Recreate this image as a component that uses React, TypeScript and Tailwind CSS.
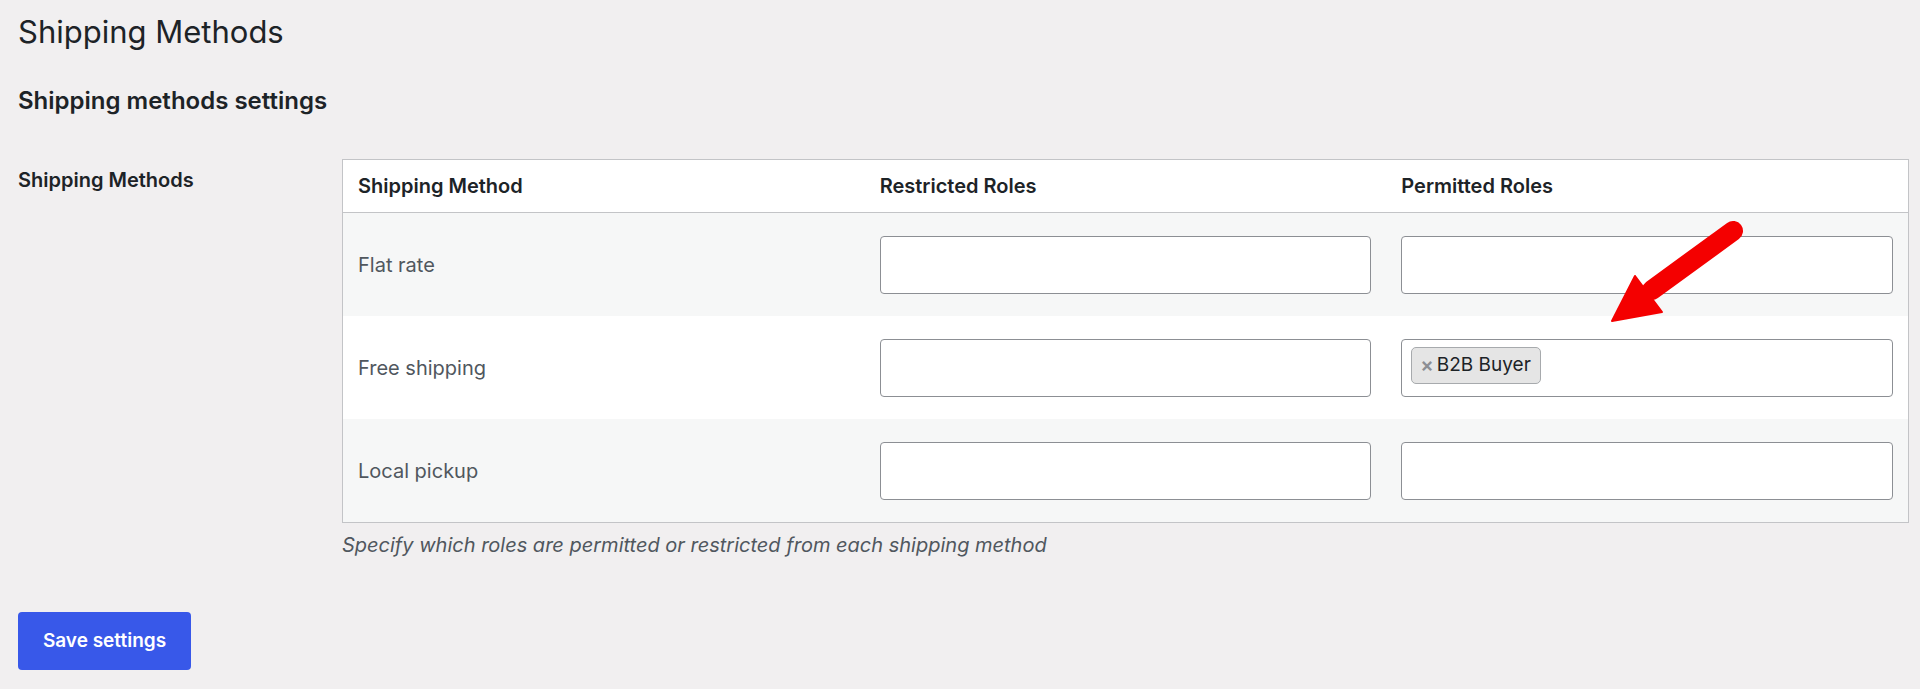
import React from 'react';

type Method = { name: string; permitted: string[] };

const methods: Method[] = [
  { name: 'Flat rate', permitted: [] },
  { name: 'Free shipping', permitted: ['B2B Buyer'] },
  { name: 'Local pickup', permitted: [] },
];

const RoleField: React.FC<{ roles?: string[] }> = ({ roles = [] }) => (
  <div className="h-[58px] w-full rounded-[4px] border border-[#8c8f94] bg-white flex items-start pl-[9px] pt-[7px] gap-1">
    {roles.map((role) => (
      <span
        key={role}
        className="h-[37px] flex items-center gap-[3px] rounded-[5px] border border-[#a7aaad] bg-[#e5e5e5] pl-[8px] pr-[9px] text-[19px] text-[#1d2327]"
      >
        <span className="text-[#8c8f94] text-[20px] font-semibold leading-none">×</span>
        {role}
      </span>
    ))}
  </div>
);

const ArrowOverlay: React.FC = () => (
  <svg
    className="absolute left-0 top-0 pointer-events-none"
    width="1920"
    height="689"
    viewBox="0 0 1920 689"
  >
    <line x1="1733" y1="231" x2="1652" y2="290" stroke="#f40000" strokeWidth="20" strokeLinecap="round" />
    <polygon points="1612,321 1635,276 1662,312" fill="#f40000" strokeLinejoin="round" stroke="#f40000" strokeWidth="2" />
  </svg>
);

export default function App() {
  return (
    <div
      className="relative min-h-[689px] bg-[#f1eff0] text-[#1d2327] pl-[18px] pr-[11px]"
      style={{ fontFamily: 'Inter, "Liberation Sans", Arial, sans-serif' }}
    >
      <h1 className="pt-[12px] text-[31px] leading-[40px] font-normal">Shipping Methods</h1>
      <h2 className="mt-[33px] text-[24px] leading-[31px] font-semibold">Shipping methods settings</h2>

      <div className="mt-[43px] flex">
        <div className="w-[324px] shrink-0 pt-[7px] text-[20px] leading-[28px] font-semibold">Shipping Methods</div>

        <div className="flex-1">
          <div className="border border-[#c3c4c7] bg-white">
            <div className="grid grid-cols-3 h-[53px] border-b border-[#c3c4c7] text-[20px] font-semibold">
              <div className="px-[15px] flex items-center">Shipping Method</div>
              <div className="px-[15px] flex items-center">Restricted Roles</div>
              <div className="px-[15px] flex items-center">Permitted Roles</div>
            </div>
            {methods.map((m, i) => (
              <div
                key={m.name}
                className={`grid grid-cols-3 h-[103px] ${i % 2 === 0 ? 'bg-[#f6f7f7]' : 'bg-white'}`}
              >
                <div className="px-[15px] flex items-center text-[20px] text-[#50575e]">{m.name}</div>
                <div className="px-[15px] flex items-center">
                  <RoleField />
                </div>
                <div className="px-[15px] flex items-center">
                  <RoleField roles={m.permitted} />
                </div>
              </div>
            ))}
          </div>
          <p className="mt-[8px] text-[20px] leading-[28px] italic text-[#50575e]">
            Specify which roles are permitted or restricted from each shipping method
          </p>
        </div>
      </div>

      <button className="mt-[53px] h-[58px] w-[173px] rounded-[4px] bg-[#3858e9] text-white text-[19px] font-semibold">
        Save settings
      </button>

      <ArrowOverlay />
    </div>
  );
}
